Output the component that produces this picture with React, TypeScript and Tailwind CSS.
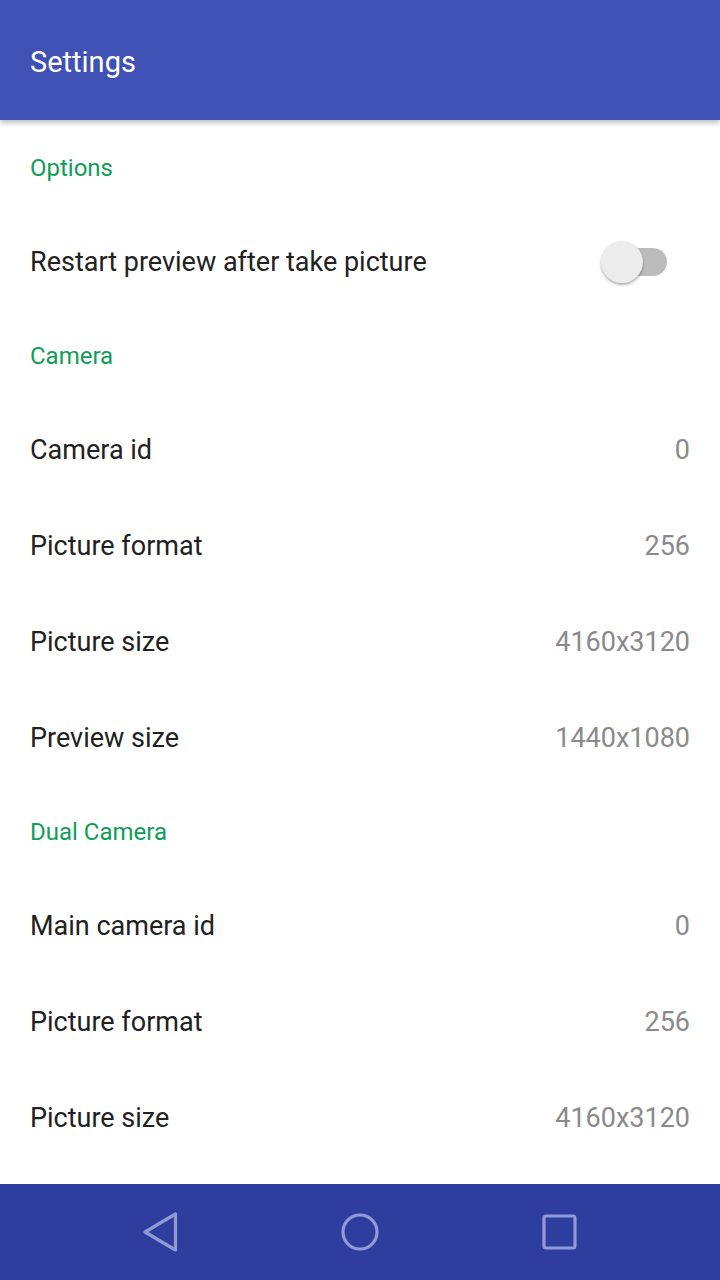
import React from 'react';

type Row = { kind: 'header'; label: string; first?: boolean } | { kind: 'value'; label: string; value: string } | { kind: 'switch'; label: string };

const rows: Row[] = [
  { kind: 'header', label: 'Options', first: true },
  { kind: 'switch', label: 'Restart preview after take picture' },
  { kind: 'header', label: 'Camera' },
  { kind: 'value', label: 'Camera id', value: '0' },
  { kind: 'value', label: 'Picture format', value: '256' },
  { kind: 'value', label: 'Picture size', value: '4160x3120' },
  { kind: 'value', label: 'Preview size', value: '1440x1080' },
  { kind: 'header', label: 'Dual Camera' },
  { kind: 'value', label: 'Main camera id', value: '0' },
  { kind: 'value', label: 'Picture format', value: '256' },
  { kind: 'value', label: 'Picture size', value: '4160x3120' },
];

function Toggle() {
  return (
    <div className="relative w-[66px] h-[42px] mr-[53px]">
      <div className="absolute left-[2px] right-0 top-[7px] h-[28px] rounded-full bg-[#bcbcbc]" />
      <div className="absolute left-0 top-0 w-[42px] h-[42px] rounded-full bg-[#ececec] shadow-[0_2px_3px_rgba(0,0,0,0.3)]" />
    </div>
  );
}

export default function App() {
  return (
    <div className="w-[720px] h-[1280px] flex flex-col bg-white font-['Roboto',sans-serif] overflow-hidden">
      {/* App bar */}
      <div className="relative z-10 h-[120px] shrink-0 bg-[#3f51b5] flex items-center pl-[30px] pt-[4px] shadow-[0_3px_5px_rgba(0,0,0,0.25)]">
        <span className="text-white text-[29px] leading-none">Settings</span>
      </div>

      {/* List */}
      <div className="flex-1 overflow-hidden">
        {rows.map((r, i) => {
          if (r.kind === 'header') {
            return (
              <div
                key={i}
                className={`${r.first ? 'h-[94px] pt-[1px]' : 'h-[92px] pb-[1px]'} flex items-center pl-[30px] text-[24px] text-[#0f9d58]`}
              >
                {r.label}
              </div>
            );
          }
          if (r.kind === 'switch') {
            return (
              <div key={i} className="h-[96px] flex items-center justify-between pl-[30px]">
                <span className="text-[27px] text-[#212121]">{r.label}</span>
                <Toggle />
              </div>
            );
          }
          return (
            <div key={i} className="h-[96px] flex items-center justify-between pl-[30px] pr-[30px]">
              <span className="text-[27px] text-[#212121]">{r.label}</span>
              <span className="text-[27px] text-[#8a8a8a]">{r.value}</span>
            </div>
          );
        })}
      </div>

      {/* Nav bar */}
      <div className="h-[96px] shrink-0 bg-[#2f3e9e] grid grid-cols-3 px-[60px] items-center">
        <div className="flex justify-center">
          <svg width="40" height="44" viewBox="0 0 40 44" fill="none" stroke="#8f9ad6" strokeWidth="3.2" strokeLinejoin="round" strokeLinecap="round">
            <path d="M35.5 4 L35.5 40 L5 22 Z" />
          </svg>
        </div>
        <div className="flex justify-center">
          <svg width="40" height="40" viewBox="0 0 40 40" fill="none" stroke="#8f9ad6" strokeWidth="3.2">
            <circle cx="20" cy="20" r="17" />
          </svg>
        </div>
        <div className="flex justify-center">
          <svg width="36" height="36" viewBox="0 0 36 36" fill="none" stroke="#8f9ad6" strokeWidth="3.2">
            <rect x="2" y="2" width="31" height="32" rx="2" />
          </svg>
        </div>
      </div>
    </div>
  );
}
